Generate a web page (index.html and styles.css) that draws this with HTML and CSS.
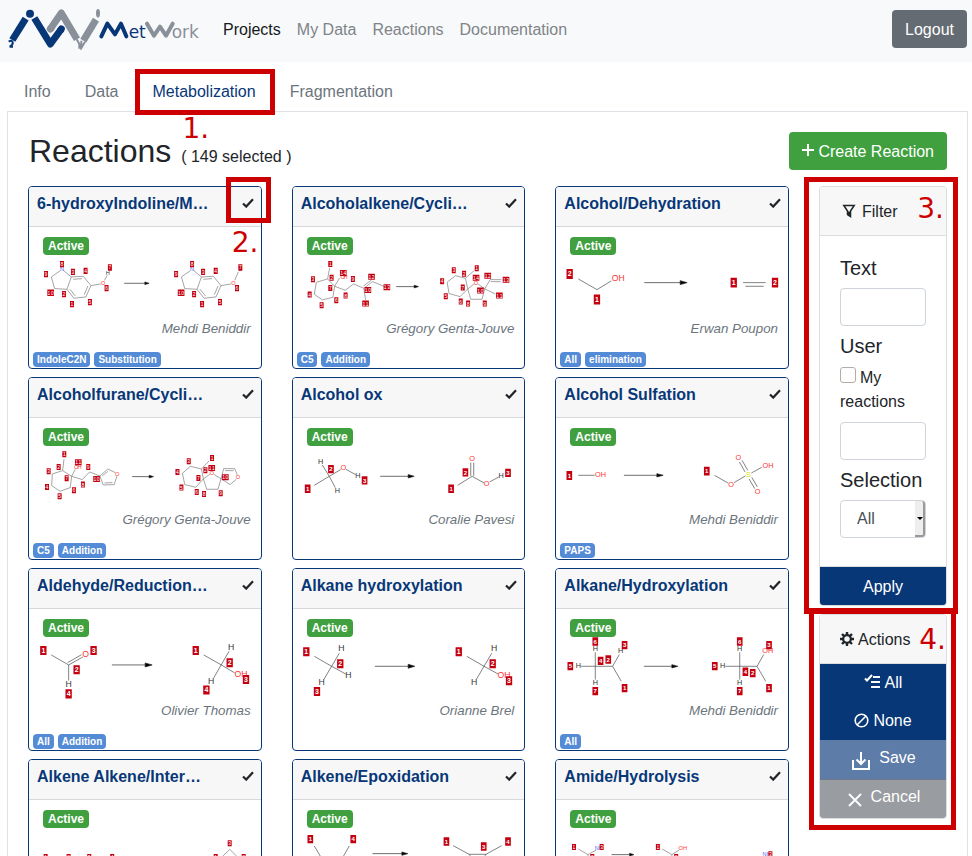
FILE: index.html
```html
<!DOCTYPE html>
<html lang="en">
<head>
<meta charset="utf-8">
<meta name="viewport" content="width=device-width, initial-scale=1">
<title>MetWork - Reactions</title>
<link rel="stylesheet" href="styles.css">
</head>
<body>
<svg class="sprite" aria-hidden="true">
  <symbol id="check" viewBox="0 0 12 10"><path d="M1 5.5 4.2 8.6 11 1.2" fill="none" stroke="#212529" stroke-width="2.2"/></symbol>
</svg>

<header class="navbar">
  <a class="brand" href="#" aria-label="MetWork">
    <svg viewBox="24 24 576 126" width="192" height="42">
      <g fill="none" stroke-width="21">
        <g stroke="#083778">
          <path d="M37 120 77 56"/>
          <path d="M103 54 151 132 184 87" stroke-linejoin="round"/>
          <path d="M183 89l1-2" stroke-linecap="round"/>
          <path d="M26 125q10-6 12 2t-9 13h10" stroke-width="6"/>
        </g>
        <g stroke="#8a9099">
          <path d="M151 87 184 39 231 118" stroke-linejoin="round"/>
          <path d="M151 87l1-1" stroke-linecap="round"/>
          <path d="M250 122 288 59"/>
          <path d="M230 118l8 14v14M244 122v22l11-19" stroke-width="6"/>
        </g>
      </g>
      <circle cx="90" cy="41" r="12" fill="#083778"/>
      <ellipse cx="294" cy="40" rx="6" ry="13" fill="#8a9099"/>
      <g fill="none" stroke-width="12" stroke-linecap="round" stroke-linejoin="round">
        <path d="M304 109 322 71 345 103 363 71 379 109" stroke="#083778"/>
        <path d="M441 71 462 107 480 80 498 107 518 71" stroke="#8a9099"/>
      </g>
      <text class="logo-text logo-blue" x="386" y="114">et</text>
      <text class="logo-text logo-gray" x="515" y="114">ork</text>
    </svg>
  </a>
  <nav class="main-nav">
    <a class="current" href="#">Projects</a>
    <a href="#">My Data</a>
    <a href="#">Reactions</a>
    <a href="#">Documentation</a>
  </nav>
  <button class="btn btn-gray" type="button">Logout</button>
</header>

<nav class="tabs">
  <a href="#">Info</a>
  <a href="#">Data</a>
  <a class="current" href="#">Metabolization<span class="callout callout-1"><span class="num">1.</span></span></a>
  <a href="#">Fragmentation</a>
</nav>

<main class="pane">
  <div class="title-row">
    <h1>Reactions <small>( 149 selected )</small></h1>
    <button class="btn btn-green" type="button"><svg width="12" height="12" viewBox="0 0 12 12"><path d="M6 0v12M0 6h12" stroke="#fff" stroke-width="2"/></svg>Create Reaction</button>
  </div>

  <div class="columns">
    <section class="cards">

      <article class="card">
        <header><h2>6-hydroxyIndoline/M…</h2><svg class="check"><use href="#check"/></svg><span class="callout callout-2"><span class="num">2.</span></span></header>
        <span class="status">Active</span>
        <svg class="scheme fine" viewBox="27 225 696 192">
          <path class="bond" d="M121 272 94 291 104 326 141 328 154 291 131 272M154 291 190 289 213 317 198 351 162 355 141 328M160 298 186 296M204 318 193 344M166 348 150 328M213 317 243 312M254 301 262 286M512 272 485 291 495 326 532 328 545 291 522 272M545 291 581 289 604 317 589 351 553 355 532 328M551 298 577 296M595 318 584 344M557 348 541 328M604 317 634 312M645 301 656 276"/>
          <path class="arrow" d="M313 310h62v-4l13 4-13 4v-4"/>
          <text class="n" x="126 517" y="274">NN</text><text class="o" x="250 641" y="316">OO</text><text class="atom" x="264" y="284">H</text>
          <path class="mark" d="M126 243v19M78 273v19M159 266v19M197 263v19M270 253v19M260 315v19M132 333v19M156 363v19M210 357v19M517 243v19M469 273v19M550 266v19M588 263v19M662 253v19M652 315v19M523 333v19M547 363v19M601 357v19"/>
          <path class="mark wide" d="M92 329v19M484 329v19"/>
          <text class="mark-num" x="126 78 159 197 270 260 132 156 210 87 97" y="258 289 281 278 268 330 348 378 372 344 344">89347621510</text>
          <text class="mark-num" x="517 469 550 588 662 652 523 547 601 479 489" y="258 289 281 278 268 330 348 378 372 344 344">89347621510</text>
        </svg>
        <p class="author">Mehdi Beniddir</p>
        <footer><span class="tag">IndoleC2N</span><span class="tag">Substitution</span></footer>
      </article>

      <article class="card">
        <header><h2>Alcoholalkene/Cycli…</h2><svg class="check"><use href="#check"/></svg></header>
        <span class="status">Active</span>
        <svg class="scheme fine" viewBox="24 225 696 192">
          <path class="bond" d="M128 297 94 307 88 343 112 360 144 352 149 319zL134 264M149 319 164 294M149 319 181 331 206 312 237 325 263 305 297 319M236 318 260 300M237 325 242 360M512 287 542 295 549 327 526 350 493 341 487 307zM542 295 568 272M549 327 568 312M580 312 600 327 592 358 558 358 549 327M600 327 616 299H650M618 305H648M600 327 632 342"/>
          <path class="arrow" d="M334 320h54v-4l13 4-13 4v-4"/>
          <text class="o" x="173 574" y="296 314">OO</text><text class="o" x="182" y="296">H</text>
          <path class="mark" d="M136 243v18M140 284v18M84 289v18M74 335v18M110 367v18M154 352v18M136 315v18M182 338v18M204 288v18M507 262v18M538 272v18M576 256v18M472 295v18M483 340v18M528 356v18M534 314v18M550 362v18M600 362v18"/>
          <path class="mark wide" d="M175 270v18M249 321v18M260 281v18M306 313v18M242 362v18M574 284v18M609 278v18M664 290v18M587 323v18M644 338v18"/>
          <text class="mark-num" x="136 140 84 74 110 154 136 182 204 170 180 244 254 255 265 301 311 237 247" y="258 299 304 350 382 367 330 353 303 285 285 336 336 296 296 328 328 377 377">1234567891410121311</text>
          <text class="mark-num" x="507 538 576 472 483 528 534 550 600 569 579 604 614 659 669 582 592 639 649" y="277 287 271 310 355 371 329 377 377 299 299 293 293 305 305 338 338 353 353">3214567891412131011</text>
        </svg>
        <p class="author">Grégory Genta-Jouve</p>
        <footer><span class="tag">C5</span><span class="tag">Addition</span></footer>
      </article>

      <article class="card">
        <header><h2>Alcohol/Dehydration</h2><svg class="check"><use href="#check"/></svg></header>
        <span class="status">Active</span>
        <svg class="scheme" viewBox="24 225 696 192">
          <path class="bond" d="M91 297 147 329 190 303M586 308H654M593 319H648"/>
          <path class="arrow" d="M289 308h108v-6l21 6-21 6v-6"/>
          <text class="o" x="211" y="302">OH</text>
          <path class="mark" d="M65 267v30M147 344v30M558 293v30M682 293v30"/>
          <text class="mark-num" x="65 147 558 682" y="289 366 315 315">2112</text>
        </svg>
        <p class="author">Erwan Poupon</p>
        <footer><span class="tag">All</span><span class="tag">elimination</span></footer>
      </article>

      <article class="card">
        <header><h2>Alcoholfurane/Cycli…</h2><svg class="check"><use href="#check"/></svg></header>
        <span class="status">Active</span>
        <svg class="scheme fine" viewBox="27 222 696 192">
          <path class="bond" d="M128 296 97 306 95 341 120 358 151 347 155 313zL132 262M155 313 166 292M155 313 187 323 209 300 240 312 264 291 286 302M291 313 283 338 250 339 240 312M247 312 264 298M278 332 254 333M512 283 545 291 551 321 528 346 495 338 488 304zM545 291 568 267M551 321 570 307M582 307 604 320 595 352 561 352 551 321M604 320 612 290 645 290 653 309M650 322 631 338 604 320M616 296H642"/>
          <path class="arrow" d="M337 314h51v-4l13 4-13 4v-4"/>
          <text class="o" x="169 179 292 576 655" y="290 290 312 309 321">OHOOO</text>
          <path class="mark" d="M133 238v18M116 276v18M86 289v18M81 336v18M119 364v18M162 346v18M140 310v18M189 329v18M205 276v18M507 259v18M577 249v18M473 291v18M485 338v18M531 351v18M536 309v18M557 286v18M553 357v18M603 355v18"/>
          <path class="mark wide" d="M175 262v18M230 312v18M576 279v18M617 307v18"/>
          <text class="mark-num" x="133 116 86 81 119 162 140 189 205 170 180 225 235" y="253 291 304 351 379 361 325 344 291 277 277 327 327">1234567891110</text>
          <text class="mark-num" x="507 577 473 485 531 536 557 553 603 571 581 612 622" y="274 264 306 353 366 324 301 372 370 294 294 322 322">3145672891110</text>
        </svg>
        <p class="author">Grégory Genta-Jouve</p>
        <footer><span class="tag">C5</span><span class="tag">Addition</span></footer>
      </article>

      <article class="card">
        <header><h2>Alcohol ox</h2><svg class="check"><use href="#check"/></svg></header>
        <span class="status">Active</span>
        <svg class="scheme medium" viewBox="24 222 696 192">
          <path class="bond" d="M88 340 133 313 112 279M133 313 151 347M133 313 167 293M183 292 212 308M519 340 562 313 598 333M558 312V272M567 312V272M615 330 642 315"/>
          <path class="arrow" d="M286 313h84v-5l18 5-18 5v-5"/>
          <text class="atom" x="107 157 219 649" y="276 363 318 318">HHHH</text>
          <text class="o" x="175 562 606" y="294 267 342">OOO</text>
          <path class="mark" d="M68 338v25M138 279v25M239 313v25M499 338v25M542 289v25M670 290v25"/>
          <text class="mark-num" x="68 138 239 499 542 670" y="357 298 332 357 308 309">123123</text>
        </svg>
        <p class="author">Coralie Pavesi</p>
        <footer></footer>
      </article>

      <article class="card">
        <header><h2>Alcohol Sulfation</h2><svg class="check"><use href="#check"/></svg></header>
        <span class="status">Active</span>
        <svg class="scheme medium" viewBox="24 222 696 192">
          <path class="bond" d="M91 310H140M500 310 542 334M559 332 593 312M611 303 642 286M575 270 592 300M583 265 600 295M604 321 621 350M612 316 629 345"/>
          <path class="arrow" d="M228 310h99v-5l19 5-19 5v-5"/>
          <text class="o" x="550 572 630" y="345 264 365">OOO</text>
          <text class="o large" x="158" y="315">OH</text><text class="o large" x="661" y="288">OH</text>
          <text class="s" x="602" y="315">S</text>
          <path class="mark" d="M64 297v27M477 284v27"/>
          <text class="mark-num" x="64 477" y="317 304">11</text>
        </svg>
        <p class="author">Mehdi Beniddir</p>
        <footer><span class="tag">PAPS</span></footer>
      </article>

      <article class="card">
        <header><h2>Aldehyde/Reduction…</h2><svg class="check"><use href="#check"/></svg></header>
        <span class="status">Active</span>
        <svg class="scheme" viewBox="27 219 696 192">
          <path class="bond" d="M94 273 146 303 189 279M143 296 185 272M146 303V350M552 273 605 303 645 327M628 262 582 342"/>
          <path class="arrow" d="M276 303h100v-6l21 6-21 6v-6"/>
          <text class="atom" x="146 634 574" y="369 258 360">HHH</text>
          <text class="o" x="197" y="279">O</text><text class="o" x="664" y="339">OH</text>
          <path class="mark" d="M70 246v27M221 246v27M170 304v27M146 376v28M528 246v27M630 283v27M679 333v27M560 365v27"/>
          <text class="mark-num" x="70 221 170 146 528 630 679 560" y="266 266 324 396 266 303 353 385">13241234</text>
        </svg>
        <p class="author">Olivier Thomas</p>
        <footer><span class="tag">All</span><span class="tag">Addition</span></footer>
      </article>

      <article class="card">
        <header><h2>Alkane hydroxylation</h2><svg class="check"><use href="#check"/></svg></header>
        <span class="status">Active</span>
        <svg class="scheme" viewBox="24 219 696 192">
          <path class="bond" d="M88 277 140 307 182 330M163 268 117 346M546 277 598 307 640 330M621 268 575 346"/>
          <path class="arrow" d="M270 307h100v-6l20 6-20 6v-6"/>
          <text class="atom" x="169 190 110 628 568" y="261 342 363 261 363">HHHHH</text>
          <text class="o" x="658" y="342">OH</text>
          <path class="mark" d="M64 250v27M166 286v27M96 369v27M522 250v27M624 286v27M673 337v27"/>
          <text class="mark-num" x="64 166 96 522 624 673" y="270 306 389 270 306 357">123123</text>
        </svg>
        <p class="author">Orianne Brel</p>
        <footer></footer>
      </article>

      <article class="card">
        <header><h2>Alkane/Hydroxylation</h2><svg class="check"><use href="#check"/></svg></header>
        <span class="status">Active</span>
        <svg class="scheme medium" viewBox="24 219 696 192">
          <path class="bond" d="M99 307H194L214 272M142 265V347M194 307 220 352M533 307H628L648 272M576 265V347M628 307 654 352"/>
          <path class="arrow" d="M288 307h84v-5l18 5-18 5v-5"/>
          <text class="atom" x="142 91 142 218 576 525 576" y="261 313 363 268 261 313 363">HHHHHHH</text>
          <text class="o" x="660" y="268">OH</text>
          <path class="mark" d="M142 220v25M67 294v25M158 278v25M181 274v25M230 231v25M230 360v25M142 369v25M576 220v25M501 294v25M593 311v25M615 315v25M664 231v25M664 360v25M576 369v25"/>
          <text class="mark-num" x="142 67 158 181 230 230 142" y="239 313 297 293 250 379 388">6542317</text>
          <text class="mark-num" x="576 501 593 615 664 664 576" y="239 313 330 334 250 379 388">6542317</text>
        </svg>
        <p class="author">Mehdi Beniddir</p>
        <footer><span class="tag">All</span></footer>
      </article>

      <article class="card">
        <header><h2>Alkene Alkene/Inter…</h2><svg class="check"><use href="#check"/></svg></header>
        <span class="status">Active</span>
        <svg class="scheme fine" viewBox="27 792 696 192">
          <path class="bond" d="M90 900 112 888 134 900M220 900 242 888 264 900M600 886 630 856 660 886 630 916z"/>
          <path class="arrow" d="M330 900h62v-4l13 4-13 4v-4"/>
          <path class="mark" d="M77 870v18M146 870v18M208 870v18M277 870v18M630 829v18M588 870v18M672 870v18"/>
          <text class="mark-num" x="77 146 208 277 630 588 672" y="885 885 885 885 844 885 885">1234312</text>
        </svg>
        <p class="author">Olivier Thomas</p>
        <footer></footer>
      </article>

      <article class="card">
        <header><h2>Alkene/Epoxidation</h2><svg class="check"><use href="#check"/></svg></header>
        <span class="status">Active</span>
        <svg class="scheme medium" viewBox="24 792 696 192">
          <path class="bond" d="M88 846 114 890H168L193 846M120 882H162M505 845 553 871H604L651 845M553 871 578 905 604 871"/>
          <path class="arrow" d="M263 869h88v-5l18 5-18 5v-5"/>
          <path class="mark" d="M76 813v25M205 813v25M485 820v25M670 820v25M597 835v25"/>
          <text class="mark-num" x="76 205 485 670 597" y="832 832 839 839 854">14143</text>
        </svg>
        <p class="author">Olivier Thomas</p>
        <footer></footer>
      </article>

      <article class="card">
        <header><h2>Amide/Hydrolysis</h2><svg class="check"><use href="#check"/></svg></header>
        <span class="status">Active</span>
        <svg class="scheme fine" viewBox="24 792 696 192">
          <path class="bond" d="M91 855 120 872 145 858M120 872V900M343 855 372 872 394 858M372 872V900"/>
          <path class="arrow" d="M191 872h54v-4l13 4-13 4v-4"/>
          <text class="n" x="153" y="859">NH</text><text class="o" x="405" y="858">OH</text><text class="n" x="657" y="876">NH</text>
          <path class="mark" d="M78 840v18M161 840v18M133 870v18M330 840v18M385 870v18M668 862v18"/>
          <text class="mark-num" x="78 161 133 330 385 668" y="855 855 885 855 885 877">132123</text>
        </svg>
        <p class="author">Mehdi Beniddir</p>
        <footer></footer>
      </article>
    </section>

    <aside class="sidebar">
      <div class="panel-wrap">
        <form class="panel">
          <header><svg width="14" height="14" viewBox="0 0 14 14"><path d="M1.8 1.5h10.4L8.5 7v5.5L5.5 10.5V7z" fill="none" stroke="#212529" stroke-width="1.5"/><path d="M6 7.5h2.2v4.5L6 11z" fill="#212529"/></svg>Filter</header>
          <div class="fields">
            <label class="heading" for="text">Text</label>
            <input class="control" id="text" type="text">
            <label class="heading" for="user">User</label>
            <div class="mine"><input id="mine" type="checkbox"><label for="mine">My reactions</label></div>
            <input class="control" id="user" type="text">
            <label class="heading" for="selection">Selection</label>
            <div class="select"><select class="control" id="selection"><option>All</option></select></div>
          </div>
          <button class="action apply" type="button">Apply</button>
        </form>
        <span class="callout callout-3"><span class="num">3.</span></span>
      </div>

      <div class="panel-wrap">
        <div class="panel">
          <header class="tight"><svg width="14" height="14" viewBox="0 0 14 14"><circle cx="7" cy="7" r="3.8" fill="none" stroke="#212529" stroke-width="2.2"/><path d="M7 0v3M7 11v3M0 7h3M11 7h3M2 2l2.2 2.2M9.8 9.8 12 12M2 12l2.2-2.2M9.8 4.2 12 2" stroke="#212529" stroke-width="2.4"/></svg>Actions</header>
          <button class="action" type="button"><svg width="17" height="16" viewBox="0 0 17 16"><path d="M1 4.500 3 6.500 8 1M9 3h7M7 8h9M7 13h9" fill="none" stroke="#fff" stroke-width="2"/></svg>All</button>
          <button class="action" type="button"><svg width="15" height="15" viewBox="0 0 15 15"><path d="M3 12 12 3" stroke="#fff" stroke-width="1.6"/><circle cx="7.500" cy="7.500" r="6.300" fill="none" stroke="#fff" stroke-width="1.600"/></svg>None</button>
          <button class="action save" type="button" disabled><svg width="18" height="18" viewBox="0 0 18 18"><path d="M1 8v9h16V8M9 0v11M4.500 7.500 9 12l4.500-4.500" fill="none" stroke="#fff" stroke-width="2"/></svg>Save</button>
          <button class="action cancel" type="button" disabled><svg width="14" height="14" viewBox="0 0 14 14"><path d="M1 1 13 13M13 1 1 13" stroke="#fff" stroke-width="1.800"/></svg>Cancel</button>
        </div>
        <span class="callout callout-4"><span class="num">4.</span></span>
      </div>
    </aside>
  </div>
</main>
</body>
</html>
```
FILE: styles.css
```css
*, ::before, ::after { box-sizing: border-box; }

body {
  margin: 0;
  background: #fff;
  color: #212529;
  font: 16px/24px "Liberation Sans", Arial, sans-serif;
}

a { text-decoration: none; }
h1, h2, p { margin: 0; }
button, input, select { font: inherit; }
.sprite { position: absolute; width: 0; height: 0; }

/* top bar */
.navbar {
  display: flex;
  align-items: center;
  height: 62px;
  padding: 0 5px 4px 8px;
  background: #f8f9fb;
}
.brand { display: flex; margin-right: 23px; }
.main-nav { display: flex; flex: 1; gap: 16px; padding-top: 2px; }
.main-nav a { color: #808488; }
.main-nav .current { color: #16191c; }

.logo-text { font: 51px "DejaVu Sans", sans-serif; }
.logo-blue { fill: #083778; }
.logo-gray { fill: #8a9099; }

.btn {
  display: flex;
  align-items: center;
  height: 38px;
  padding: 2px 13px 0;
  border: 0;
  border-radius: 4px;
  color: #fff;
}
.btn svg { margin: 0 4px 4px 0; }
.btn-gray { background: #646b72; }
.btn-green { background: #40a040; }

/* tabs */
.tabs { display: flex; margin: 8px 4px -1px 7px; }
.tabs a {
  position: relative;
  padding: 9px 16px 7px;
  border: 1px solid transparent;
  color: #6c757d;
}
.tabs .current { color: #083778; }

.pane {
  margin: 0 4px 0 7px;
  padding: 20px;
  border: 1px solid #dee2e6;
}

.title-row {
  display: flex;
  justify-content: space-between;
  height: 38px;
  margin-bottom: 16px;
}
h1 { padding-left: 1px; font-size: 32px; font-weight: 400; line-height: 38px; }
h1 small { padding-left: 1px; font-size: 16px; line-height: 16px; }

.columns { display: grid; grid-template-columns: minmax(0, 1fr) 128px; gap: 30px; align-items: start; }
.cards { display: grid; grid-template-columns: repeat(3, minmax(0, 1fr)); gap: 8px 30px; }

/* reaction cards */
.card {
  display: flex;
  flex-direction: column;
  min-height: 183px;
  border: 1px solid #083778;
  border-radius: 4px;
}
.card header {
  position: relative;
  display: flex;
  justify-content: space-between;
  padding: 5px 7px 10px 8px;
  border-bottom: 1px solid #d6d8da;
  border-radius: 3px 3px 0 0;
  background: #f7f7f7;
}
.card h2 { color: #083778; font-size: 16px; line-height: 24px; white-space: nowrap; }
.check { width: 12px; height: 10px; margin-top: 6px; }
.status {
  align-self: flex-start;
  margin: 10px 0 0 14px;
  padding: 0 5px;
  border-radius: 4px;
  background: #40a040;
  color: #fff;
  font-size: 12px;
  font-weight: 700;
  line-height: 18px;
}
.scheme { display: block; width: 100%; overflow: visible; }
.author {
  padding-right: 10px;
  color: #6c757d;
  font-size: smaller;
  font-style: italic;
  line-height: 20px;
  text-align: right;
}
.card footer { display: flex; gap: 4px; margin-top: auto; padding: 0 4px 1px; }
.tag {
  padding: 0 4px;
  border-radius: 4px;
  background: #548bd6;
  color: #fff;
  font-size: 10px;
  font-weight: 700;
  line-height: 15px;
}

/* molecule drawings */
.scheme text { font-size: 26px; text-anchor: middle; }
.medium text { font-size: 21px; }
.medium .large { font-size: 24px; }
.scheme.fine text { font-size: 17px; }
.scheme.medium text { font-size: 22px; }
.bond { fill: none; stroke: #444; stroke-width: 2; }
.fine .bond { stroke: #777; }
.arrow { fill: #000; stroke: #222; stroke-width: 2; }
.atom { fill: #333; }
.o { fill: #ff3333; }
.n { fill: #5566ee; }
.s { fill: #dddd00; }
.mark { fill: none; stroke: #c40010; stroke-width: 19; }
.medium .mark { stroke-width: 17; }
.fine .mark { stroke-width: 12; }
.fine .wide { stroke-width: 20; }
.scheme .mark-num { fill: #fff; font-size: 21px; font-weight: 700; }
.scheme.medium .mark-num { font-size: 18px; }
.scheme.fine .mark-num { font-size: 15px; font-weight: 400; }

/* sidebar */
.sidebar { display: grid; gap: 8px; }
.panel-wrap { position: relative; }
.panel {
  overflow: hidden;
  border: 1px solid #dcdddf;
  border-radius: 4px;
}
.panel header {
  display: flex;
  align-items: center;
  gap: 6px;
  height: 49px;
  padding: 2px 0 0 22px;
  border-bottom: 1px solid #dcdddf;
  background: #f7f7f7;
}
.panel header svg { margin-bottom: 2px; }
.panel .tight { gap: 4px; padding-left: 20px; }
.fields { display: grid; gap: 8px; padding: 20px 20px 28px; }
.heading { font-size: 20px; line-height: 24px; white-space: nowrap; }
.control {
  width: 100%;
  height: 38px;
  padding: 0 12px;
  border: 1px solid #ced4da;
  border-radius: 4px;
  background: #fff;
  color: #495057;
}
.mine input {
  appearance: none;
  width: 16px;
  height: 16px;
  margin: 0 4px 0 0;
  border: 1px solid #b5aca6;
  border-radius: 3px;
  background: #fff;
}
.select { position: relative; }
.select select { appearance: none; padding-left: 16px; }
.select::before {
  content: "";
  position: absolute;
  inset: 1px 1px 1px auto;
  width: 10px;
  border: solid #999;
  border-width: 0 2px 2px 0;
  border-radius: 0 3px 3px 0;
  background: #eee;
  pointer-events: none;
}
.select::after {
  content: "";
  position: absolute;
  top: 17px;
  right: 3px;
  border: 3px solid transparent;
  border-top-color: #000;
  pointer-events: none;
}
.action {
  display: flex;
  align-items: center;
  justify-content: center;
  gap: 4px;
  width: 100%;
  height: 38px;
  padding: 0 6px;
  border: 0;
  background: #083778;
  color: #fff;
}
.apply { height: 39px; padding-top: 2px; border-top: 1px solid #dcdddf; }
.action svg { margin-bottom: 2px; }
.action:disabled { height: 39px; gap: 9px; padding: 0 6px 4px 8px; }
.action:disabled svg { margin: 6px 0 0; }
.save { background: #5e7ca8; }
.cancel { background: #999ca0; border-top: 1px solid #6f7a88; }

/* numbered callouts laid over the page */
.callout {
  position: absolute;
  border: 5px solid #cc0000;
  pointer-events: none;
}
.num {
  position: absolute;
  color: #cc0000;
  font: 28px/32px "DejaVu Sans", sans-serif;
}
.callout-1 { inset: -2px -3px -4px -1px; }
.callout-1 .num { top: 39px; left: 42px; }
.callout-2 { top: -10px; right: -10px; width: 45px; height: 46px; }
.callout-2 .num { top: 45px; left: 1px; }
.callout-3 { inset: -9px -11px -8px -15px; }
.callout-3 .num { top: 11px; right: 9px; }
.callout-4 { inset: -6px -9px -11px -10px; }
.callout-4 .num { top: 11px; right: 5px; }
```
